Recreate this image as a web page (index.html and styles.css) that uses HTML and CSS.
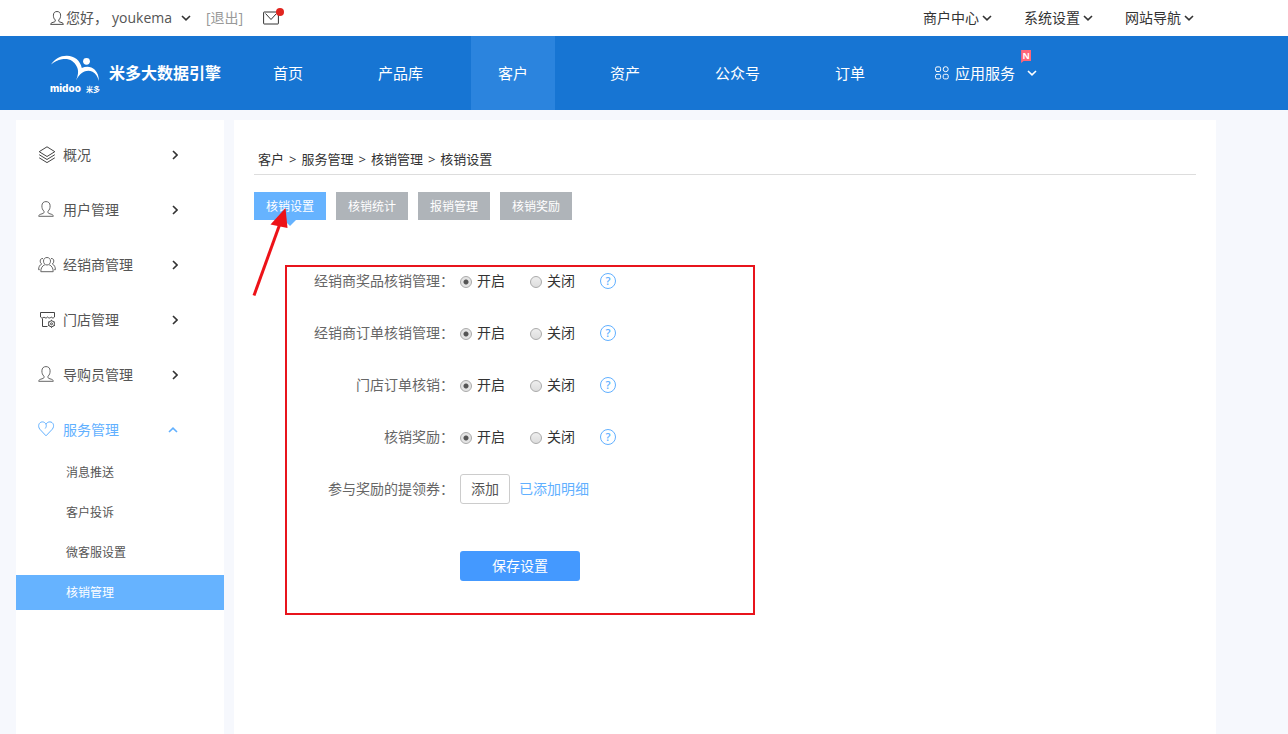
FILE: index.html
```html
<!DOCTYPE html>
<html lang="zh-CN">
<head>
<meta charset="utf-8">
<meta name="viewport" content="width=device-width, initial-scale=1">
<title>核销设置</title>
<link rel="stylesheet" href="styles.css">
</head>
<body>
<svg class="sprite" aria-hidden="true">
  <symbol id="chevron-down" viewBox="0 0 10 6"><path d="M1 1l4 3.800L9 1"/></symbol>
  <symbol id="chevron-right" viewBox="0 0 6 10"><path d="M1 1l4 4-4 4"/></symbol>
  <symbol id="person" viewBox="0 0 16 16"><path d="M6 10.200C4.300 8.800 3.900 7 3.900 4.800 3.900 2 5.600.6 8 .6s4.100 1.400 4.100 4.200c0 2.200-.4 4-2.100 5.400v1.200c0 .5.300.8.800 1l3 1c1 .4 1.500 1 1.500 1.900H.7c0-.9.500-1.500 1.500-1.900l3-1c.5-.2.8-.5.8-1z"/></symbol>
</svg>

<header>
  <div class="topbar">
    <div class="account">
      <svg class="line-icon user-icon" viewBox="0 0 16 16"><use href="#person"/></svg>
      <span class="greeting">您好，</span>
      <button class="user-menu" type="button">youkema <svg class="chevron" viewBox="0 0 10 6"><use href="#chevron-down"/></svg></button>
      <a class="logout" href="#">[退出]</a>
      <a class="mail" href="#" aria-label="消息">
        <svg class="line-icon mail-icon" viewBox="0 0 16 14"><rect x=".6" y="1" width="14.800" height="12" rx=".5"/><path d="M2.500 2.500L8 8.500l5.500-6"/></svg>
        <span class="mail-dot"></span>
      </a>
    </div>
    <div class="shortcuts">
      <button type="button">商户中心<svg class="chevron" viewBox="0 0 10 6"><use href="#chevron-down"/></svg></button>
      <button type="button">系统设置<svg class="chevron" viewBox="0 0 10 6"><use href="#chevron-down"/></svg></button>
      <button type="button">网站导航<svg class="chevron" viewBox="0 0 10 6"><use href="#chevron-down"/></svg></button>
    </div>
  </div>

  <div class="navbar">
    <a class="brand" href="#">
      <svg class="brand-mark" viewBox="0 -3 50 42">
        <path d="M1 9.500C5 4 10.500.6 17 .8c7.500.2 13.200 4.700 14.800 12.200 4.600-2.200 9.700-1.700 13 1.800 2.900 3 4.200 6.700 3.900 11.200-1.100-4.600-3-7.600-6.200-9.200-5.300-2.500-11.700-.5-16.500 8.700 2.300-5.500 2.800-9.500 1-13.500C24.200 5.500 18.500 3 12 4.200 7.500 5 4 7 1 9.500z"/>
        <circle cx="36.500" cy="6.300" r="3.400"/>
        <text class="brand-name" x="0" y="37">midoo</text>
        <text class="brand-sub" x="36" y="37">米多</text>
      </svg>
      <span class="brand-title">米多大数据引擎</span>
    </a>
    <nav class="main-nav">
      <a href="#">首页</a>
      <a href="#">产品库</a>
      <a class="active" href="#">客户</a>
      <a class="spaced" href="#">资产</a>
      <a href="#">公众号</a>
      <a href="#">订单</a>
    </nav>
    <button class="apps" type="button">
      <svg class="apps-icon" viewBox="0 0 14 14"><rect x=".6" y=".9" width="5" height="4.600" rx="1.400"/><circle cx="10.700" cy="3.200" r="2.500"/><rect x=".6" y="8.300" width="5" height="4.600" rx="1.400"/><rect x="8.200" y="8.300" width="5" height="4.600" rx="1.400"/></svg>
      <span>应用服务</span>
      <svg class="chevron" viewBox="0 0 10 6"><use href="#chevron-down"/></svg>
      <span class="new-badge">N</span>
    </button>
  </div>
</header>

<div class="page">
  <aside class="sidebar">
    <nav>
      <ul class="menu">
        <li><a class="menu-item" href="#">
          <svg class="menu-icon" viewBox="0 0 18 18"><path d="M9 .8l7.800 4.900L9 10.500 1.200 5.700zM1.200 8.700L9 13.500l7.800-4.800M1.200 11.800L9 16.600l7.800-4.800"/></svg>
          <span>概况</span><svg class="chevron-side" viewBox="0 0 6 10"><use href="#chevron-right"/></svg></a></li>
        <li><a class="menu-item" href="#">
          <svg class="menu-icon light" viewBox="0 0 18 18"><use href="#person" width="16" height="16"/></svg>
          <span>用户管理</span><svg class="chevron-side" viewBox="0 0 6 10"><use href="#chevron-right"/></svg></a></li>
        <li><a class="menu-item" href="#">
          <svg class="menu-icon light" viewBox="0 0 18 18"><path d="M9 1.500c2.200 0 3.500 1.500 3.500 3.600S11.200 9 9 9 5.500 7.200 5.500 5.100 6.800 1.500 9 1.500zM6.800 8.800c-2.500 1-4 3.200-4 6.900h12.400c0-3.700-1.500-5.900-4-6.900M5 2.500C3 2.300 2.200 3.500 2.200 5c0 1.400.5 2.400 1.500 3C1.600 9 .6 11 .6 13.700h1.200M13 2.500c2-.2 2.800 1 2.800 2.500 0 1.400-.5 2.400-1.500 3 2.100 1 3.100 3 3.100 5.700h-1.200"/></svg>
          <span>经销商管理</span><svg class="chevron-side" viewBox="0 0 6 10"><use href="#chevron-right"/></svg></a></li>
        <li><a class="menu-item" href="#">
          <svg class="menu-icon" viewBox="0 0 18 18"><path d="M2.500 1.500h14V6c-1 1.300-2.300 1.300-3.300 0-1 1.300-2.500 1.300-3.600 0-1.100 1.300-2.500 1.300-3.600 0-1 1.300-2.400 1.300-3.500 0zM4.500 7.500v8h5"/><circle cx="13.500" cy="12.800" r="3"/><circle cx="13.500" cy="12.800" r="1"/><path d="M13.500 8.800v1M13.500 15.800v1M10 10.800l.9.500M16.200 14.300l.8.500M17 10.800l-.8.500M10.800 14.300l-.8.500"/></svg>
          <span>门店管理</span><svg class="chevron-side" viewBox="0 0 6 10"><use href="#chevron-right"/></svg></a></li>
        <li><a class="menu-item" href="#">
          <svg class="menu-icon light" viewBox="0 0 18 18"><use href="#person" width="16" height="16"/></svg>
          <span>导购员管理</span><svg class="chevron-side" viewBox="0 0 6 10"><use href="#chevron-right"/></svg></a></li>
        <li><a class="menu-item open" href="#">
          <svg class="menu-icon" viewBox="0 0 18 18"><path d="M8 14.800L1.800 8.200C-.6 5 1 .9 4.400.9 6.200.9 7.300 2 8 3.200 9 1.600 10.200.9 11.900.9c3.300 0 5 3.900 2.400 7.300zM8 3.200c.6 1.500.3 2.800-.8 4.300"/></svg>
          <span>服务管理</span><svg class="chevron-up" viewBox="0 0 10 6"><path d="M1 5l4-3.800L9 5"/></svg></a>
          <ul class="submenu">
            <li><a href="#">消息推送</a></li>
            <li><a href="#">客户投诉</a></li>
            <li><a href="#">微客服设置</a></li>
            <li><a class="active" href="#" aria-current="page">核销管理</a></li>
          </ul></li>
      </ul>
    </nav>
  </aside>

  <main class="content">
    <nav class="breadcrumb" aria-label="路径">
      <a href="#">客户</a><span>&gt;</span><a href="#">服务管理</a><span>&gt;</span><a href="#">核销管理</a><span>&gt;</span><a href="#">核销设置</a>
    </nav>
    <nav class="tabs">
      <a class="active" href="#">核销设置</a>
      <a href="#">核销统计</a>
      <a href="#">报销管理</a>
      <a href="#">核销奖励</a>
      <svg class="pointer-arrow" viewBox="0 0 40 90" aria-hidden="true"><path class="shaft" d="M2 87.500L27.500 17"/><path class="head" d="M33.500 0L18.500 16.500l17 3.500z"/></svg>
    </nav>

    <form class="settings">
      <div class="row" role="radiogroup" aria-labelledby="l1">
        <span class="row-label" id="l1">经销商奖品核销管理：</span>
        <label><input type="radio" name="prize" checked>开启</label>
        <label><input type="radio" name="prize">关闭</label>
        <button class="help" type="button" aria-label="帮助">?</button>
      </div>
      <div class="row" role="radiogroup" aria-labelledby="l2">
        <span class="row-label" id="l2">经销商订单核销管理：</span>
        <label><input type="radio" name="dealer" checked>开启</label>
        <label><input type="radio" name="dealer">关闭</label>
        <button class="help" type="button" aria-label="帮助">?</button>
      </div>
      <div class="row" role="radiogroup" aria-labelledby="l3">
        <span class="row-label" id="l3">门店订单核销：</span>
        <label><input type="radio" name="store" checked>开启</label>
        <label><input type="radio" name="store">关闭</label>
        <button class="help" type="button" aria-label="帮助">?</button>
      </div>
      <div class="row" role="radiogroup" aria-labelledby="l4">
        <span class="row-label" id="l4">核销奖励：</span>
        <label><input type="radio" name="reward" checked>开启</label>
        <label><input type="radio" name="reward">关闭</label>
        <button class="help" type="button" aria-label="帮助">?</button>
      </div>
      <div class="row">
        <span class="row-label">参与奖励的提领券：</span>
        <button class="add" type="button">添加</button>
        <a class="detail" href="#">已添加明细</a>
      </div>
      <button class="save" type="submit">保存设置</button>
    </form>
  </main>
</div>
</body>
</html>
```

FILE: styles.css
```css
* { box-sizing: border-box; }

body {
  margin: 0;
  min-height: 100vh;
  display: flex;
  flex-direction: column;
  background: #f6f8fd;
  color: #333;
  font: 14px/20px "Open Sans", "Noto Sans CJK SC", sans-serif;
}

a { color: inherit; text-decoration: none; }
ul { margin: 0; padding: 0; list-style: none; }
button { padding: 0; border: 0; background: none; color: inherit; font: inherit; cursor: pointer; }
svg { display: block; flex: none; }
.sprite { position: absolute; width: 0; height: 0; }

.line-icon, .menu-icon, .apps-icon { fill: none; stroke: currentColor; stroke-width: 1; }
.chevron, .chevron-side, .chevron-up { fill: none; stroke: currentColor; stroke-width: 1.6; }
.chevron { width: 10px; height: 6px; }

/* Top bar */
.topbar {
  display: flex;
  justify-content: space-between;
  align-items: center;
  height: 36px;
  padding: 0 94px 0 50px;
  background: #fff;
}
.account { display: flex; align-items: center; color: #555; }
.user-icon { width: 14px; height: 14px; color: #333; }
.greeting { margin-left: 2px; }
.user-menu { display: flex; align-items: center; gap: 9px; margin-left: 4px; }
.user-menu .chevron, .shortcuts .chevron { color: #333; }
.logout { margin-left: 15px; color: #999; }
.mail { position: relative; margin-left: 20px; color: #333; }
.mail-icon { width: 16px; height: 14px; }
.mail-dot {
  position: absolute;
  top: -3px;
  right: -5px;
  width: 8px;
  height: 8px;
  border-radius: 50%;
  background: #e1251f;
}
.shortcuts { display: flex; gap: 32px; }
.shortcuts button { display: flex; align-items: center; gap: 3px; }

/* Main navigation */
.navbar {
  display: flex;
  height: 74px;
  padding-left: 50px;
  background: #1775d3;
  color: #fff;
  font-size: 15px;
}
.brand { display: flex; align-items: center; gap: 9px; width: 196px; }
.brand-mark { width: 50px; height: 42px; fill: #fff; }
.brand-name { font: 800 10px "Inter", sans-serif; }
.brand-sub { font: 700 7px "Noto Sans CJK SC", sans-serif; }
.brand-title { font-size: 16px; font-weight: 700; white-space: nowrap; }
.main-nav { display: flex; gap: 21px; }
.main-nav a { display: flex; align-items: center; padding: 0 27px; white-space: nowrap; }
.main-nav .active { background: #2b84de; }
.main-nav .spaced { margin-left: 7px; }
.apps { position: relative; display: flex; align-items: center; margin-left: 43px; }
.apps-icon { width: 14px; height: 14px; margin-right: 6px; }
.apps .chevron { margin-left: 12px; }
.new-badge {
  position: absolute;
  top: 14px;
  right: 6px;
  width: 10px;
  height: 13px;
  background: #ff6678;
  clip-path: polygon(0 0, 100% 0, 100% 85%, 25% 85%, 0 100%);
  font-size: 9px;
  font-weight: 700;
  line-height: 11px;
  text-align: center;
}

/* Page */
.page {
  flex: 1;
  display: flex;
  gap: 10px;
  padding: 10px 72px 0 16px;
}
.sidebar { flex: 0 0 208px; padding-top: 20px; background: #fff; }
.menu { display: flex; flex-direction: column; gap: 25px; }
.menu-item {
  display: grid;
  grid-template-columns: 18px 1fr 10px;
  align-items: center;
  column-gap: 7px;
  height: 30px;
  padding: 0 46px 0 22px;
  color: #555;
}
.menu-icon { width: 18px; height: 18px; color: #444; }
.menu-icon.light { color: #666; }
.chevron-side { width: 6px; height: 10px; color: #333; justify-self: end; }
.chevron-up { width: 10px; height: 6px; }
.menu-item.open, .menu-item.open .menu-icon { color: #61b0ff; }
.submenu { display: flex; flex-direction: column; gap: 5px; margin-top: 10px; font-size: 12px; }
.submenu a { display: flex; align-items: center; height: 35px; padding-left: 50px; color: #555; }
.submenu .active { background: #66b3ff; color: #fff; }

.content { flex: 1; min-width: 0; padding: 24px 20px 32px; background: #fff; }
.breadcrumb {
  display: flex;
  gap: 5px;
  padding: 5px 4px;
  border-bottom: 1px solid #ddd;
  font-size: 13px;
}

.tabs { position: relative; display: flex; gap: 10px; margin-top: 17px; }
.tabs a {
  position: relative;
  width: 72px;
  padding-top: 1px;
  background: #afb4b9;
  color: #fff;
  font-size: 12px;
  line-height: 27px;
  text-align: center;
}
.tabs .active { background: #66b3ff; }
.tabs .active::after {
  content: "";
  position: absolute;
  top: 100%;
  left: 50%;
  margin-left: -6px;
  border: 6px solid transparent;
  border-top-color: #66b3ff;
  border-bottom: 0;
}
.pointer-arrow { position: absolute; top: 16px; left: -2px; width: 40px; height: 90px; }
.shaft { stroke: #ed1218; stroke-width: 3; }
.head { fill: #ed1218; }

/* Settings form */
.settings {
  display: flex;
  flex-direction: column;
  gap: 24px;
  max-width: 470px;
  margin: 45px 0 0 31px;
  padding-bottom: 32px;
  border: 2px solid #e8141c;
}
.row { display: flex; align-items: center; height: 28px; }
.row-label { width: 167px; margin-right: 6px; color: #666; text-align: right; }
.row label { display: flex; align-items: center; gap: 5px; margin-right: 25px; }
.row input {
  appearance: none;
  width: 12px;
  height: 12px;
  margin: 1px 0 0;
  border: 1px solid #aaa;
  border-radius: 50%;
  background: linear-gradient(#eee, #ddd);
}
.row input:checked { background: radial-gradient(circle, #555 0 2px, #e4e4e4 3px); }
.help {
  width: 16px;
  height: 16px;
  border: 1px solid #61b0ff;
  border-radius: 50%;
  color: #61b0ff;
  font-size: 11px;
  font-weight: 600;
  line-height: 14px;
}
.add {
  width: 50px;
  height: 30px;
  border: 1px solid #ccc;
  border-radius: 3px;
  color: #555;
}
.detail { margin-left: 9px; color: #61b0ff; }
.save {
  width: 120px;
  height: 30px;
  margin: 24px 0 0 173px;
  border-radius: 3px;
  background: #4499ff;
  color: #fff;
}
```
